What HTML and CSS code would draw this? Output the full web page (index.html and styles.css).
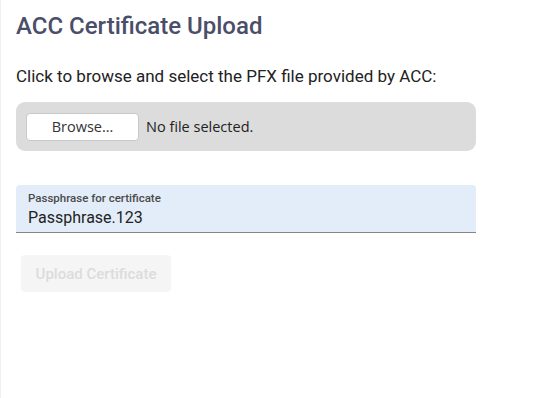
FILE: index.html
```html
<!DOCTYPE html>
<html lang="en">
<head>
  <meta charset="UTF-8">
  <title>ACC Certificate Upload</title>
  <link rel="stylesheet" href="styles.css">
</head>
<body>
  <div class="page">
    <h1 class="page-title">ACC Certificate Upload</h1>
    <p class="intro">Click to browse and select the PFX file provided by ACC:</p>
    <div class="file-box">
      <button class="browse-button" type="button">Browse…</button>
      <span class="file-name">No file selected.</span>
    </div>
    <div class="field">
      <label class="field-label" for="passphrase">Passphrase for certificate</label>
      <input class="field-input" id="passphrase" type="text" value="Passphrase.123">
    </div>
    <button class="upload-button" type="button" disabled>Upload Certificate</button>
  </div>
</body>
</html>
```

FILE: styles.css
```css
html, body {
  margin: 0;
  height: 100%;
  background: #fff;
}
body {
  font-family: Roboto, 'Liberation Sans', Arial, sans-serif;
  color: #222;
}
.page {
  box-sizing: border-box;
  height: 100%;
  border-left: 1px solid #f0f0f0;
  padding: 11px 62px 0 15px;
  display: flex;
  flex-direction: column;
  align-items: stretch;
}
.page-title {
  font-size: 24px;
  font-weight: 500;
  color: #4a4e69;
  margin: 0;
  line-height: 30px;
}
.intro {
  font-size: 17px;
  line-height: 20px;
  margin: 25px 0 0;
  color: #222;
}
.file-box {
  margin-top: 16px;
  background: #dcdcdc;
  border-radius: 9px;
  height: 49px;
  padding: 0 10px;
  box-sizing: border-box;
  display: flex;
  align-items: center;
  gap: 7px;
}
.browse-button {
  width: 113px;
  height: 28px;
  background: #fff;
  border: 1px solid #c8c8c8;
  border-radius: 4px;
  font-family: 'Open Sans', 'DejaVu Sans', sans-serif;
  font-size: 14.5px;
  color: #333;
  padding: 0;
}
.file-name {
  font-family: 'Open Sans', 'DejaVu Sans', sans-serif;
  font-size: 14.5px;
  color: #222;
}
.field {
  margin-top: 34px;
  height: 48px;
  background: #e3edf9;
  border-radius: 4px 4px 0 0;
  border-bottom: 1px solid #858585;
  box-sizing: border-box;
  padding: 7px 12px 0;
  display: flex;
  flex-direction: column;
}
.field-label {
  font-size: 11.5px;
  font-weight: 500;
  line-height: 12px;
  color: #4a4a4a;
}
.field-input {
  border: none;
  background: transparent;
  outline: none;
  padding: 0;
  margin-top: 4px;
  font-family: inherit;
  font-size: 16px;
  line-height: 20px;
  color: #222;
}
.upload-button {
  align-self: flex-start;
  margin: 22px 0 0 5px;
  width: 150px;
  height: 37px;
  background: #f5f5f5;
  border: none;
  border-radius: 4px;
  font-family: inherit;
  font-size: 15px;
  font-weight: 500;
  color: #dcdcdc;
  padding: 0;
}
```
